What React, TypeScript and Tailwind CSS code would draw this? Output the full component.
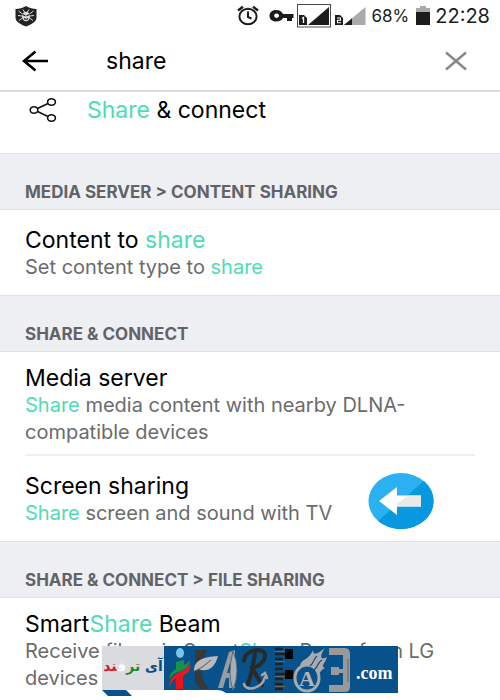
import type { ReactNode } from 'react';

function Hit({ children }: { children: ReactNode }) {
  return <span className="text-[#4fdcb4]">{children}</span>;
}

function SectionHeader({ children }: { children: ReactNode }) {
  return (
    <h2 className="border-y border-[#dfe1e4] bg-[#edeff3] pt-[26px] pb-[5px] pl-[25px] text-[17px] leading-6 font-bold text-[#626366]">
      {children}
    </h2>
  );
}

function Title({ children }: { children: ReactNode }) {
  return <span className="block text-[23px] leading-[27px] text-black">{children}</span>;
}

function Summary({ children }: { children: ReactNode }) {
  return <span className="block text-[20px] leading-[27px] text-[#6b6b6b]">{children}</span>;
}

function StatusBar() {
  return (
    <div className="flex h-8 items-center justify-between pr-[10px] pl-[14px] text-[#1c1c1c]">
      <svg className="h-[22px] w-6" viewBox="0 0 24 22" aria-hidden="true">
        <path d="M12 1 C15 3 19 4 22.500 4 L22.500 13 C22 17 17 19.500 12 21.500 C7 19.500 2 17 1.500 13 L1.500 4 C5 4 9 3 12 1Z" fill="#222" />
        <path d="M8.500 9 L4.500 6 M8 11 L4 10.500 M8.500 13 L5 15.500 M15.500 9 L19.500 6 M16 11 L20 10.500 M15.500 13 L19 15.500 M10.500 7 L9 4.500 M13.500 7 L15 4.500" stroke="#ddd" strokeWidth="1" />
        <ellipse cx="12" cy="11.500" rx="4" ry="4.800" fill="#ddd" />
        <path d="M8.500 9.500 L11.500 11 M15.500 9.500 L12.500 11 M10 13.500 Q12 15 14 13.500" stroke="#222" strokeWidth="1.200" fill="none" />
      </svg>
      <div className="flex items-center">
        <svg className="h-8 w-[130px]" viewBox="0 0 130 32" aria-hidden="true">
          <g fill="none" stroke="#1c1c1c" strokeWidth="2">
            <ellipse cx="12" cy="16.500" rx="8.600" ry="7.800" />
            <path d="M12 11.500 V17 L15.500 18.500" />
            <path d="M2 10.500 L7 6.800 M22 10.500 L17 6.800" strokeWidth="2.400" />
          </g>
          <path fillRule="evenodd" d="M40 10 C44 10 46 12 47 14 H57.500 V18 H56 V21 H51 V18 H47 C46 20 44 21.500 40 21.500 C36 21.500 33.500 19 33.500 15.700 C33.500 12.500 36 10 40 10Z M40.500 13.500 A2.500 2.200 0 1 0 40.600 13.500Z" fill="#1c1c1c" />
          <rect x="61.500" y="4.500" width="33" height="22.500" fill="none" stroke="#4a4a4a" />
          <path d="M72 25 L93 7 V25Z" fill="#1c1c1c" />
          <path d="M63 15 H68 L71 18 V25 H63Z" fill="#1c1c1c" />
          <path d="M66 18.500 L67.500 17.500 V23" stroke="#fff" strokeWidth="1.300" fill="none" />
          <path d="M108 25 L129.500 7 V25Z" fill="#aaa" />
          <path d="M108 25 L116 18.300 V25Z" fill="#1c1c1c" />
          <path d="M99 15 H104 L107 18 V25 H99Z" fill="#1c1c1c" />
          <path d="M101 18 H104.500 V20.300 H101.500 V22.800 H105" stroke="#fff" strokeWidth="1.100" fill="none" />
        </svg>
        <span className="ml-[6px] text-[17px] leading-8">68%</span>
        <svg className="ml-[6px] h-8 w-4" viewBox="0 0 16 32" aria-hidden="true">
          <path d="M5 6 H11 V8 H15 V12 H1 V8 H5Z" fill="#aaa" />
          <rect x="1" y="12" width="14" height="13" fill="#1c1c1c" />
        </svg>
        <span className="ml-1 text-[20px] leading-8">22:28</span>
      </div>
    </div>
  );
}

function Watermark() {
  return (
    <div className="absolute top-12 left-[102px]" aria-hidden="true">
      <div className="flex items-start">
        <div
          dir="rtl"
          className="h-11 w-[62px] bg-[#d9dbde] text-center font-['DejaVu_Sans',sans-serif] text-[14px] leading-10 font-bold whitespace-nowrap text-[#0b4f80]"
        >
          آی <span className="text-[#1e8a2b]">تر</span>
          <span className="text-white">ف</span>
          <span className="text-[#d8161f]">ند</span>
        </div>
        <svg className="h-[47px] w-[234px]" viewBox="0 0 234 47">
          <path d="M0 0 H234 V47 H62 Q58 44 54 44 H0Z" fill="#07528a" />
          <ellipse cx="16" cy="7" rx="4" ry="5" fill="#7cc4ea" />
          <path d="M12 27 H19 V43 H12Z" fill="#e8161c" />
          <path d="M5 42 C5 33 10 28 18 25 C23 23 25 20 26 16 C28 26 22 29 15 31 C9 33 7 37 5 42Z" fill="#e31c23" />
          <path d="M6 34 C5 27 8 26 12 23 V16 L20 14 V19 C23 18 24 16 26 14 C25 22 19 25 14 26 C9 27 7 30 6 34Z" fill="#159447" />
          <path d="M31 4 H43 L38 15 V29 Q39 37 46 43 H38 Q31 40 31 32Z" fill="#383838" />
          <path d="M30 25 C30 14 39 11 54 10 C51 22 43 27 34 23Z" fill="#b8babc" />
          <path d="M32 25 Q39 21 47 14" stroke="#555" strokeWidth="1" fill="none" />
          <path d="M54 42 L65 6 L71 4 V42 H65 V32 H62 L59 42Z M63 27 H66 V17Z" fill="#999b9e" fillRule="evenodd" />
          <path d="M69 5 Q77 24 69 44 Q63 28 69 5Z" fill="#aaaeb2" stroke="#526d80" />
          <g fill="none" strokeLinecap="round">
            <path d="M91 8 Q88 26 84 38 M80 15 C80 4 100 0 101 9 C101 17 93 21 88 22 L98 39" stroke="#292929" strokeWidth="4" />
            <path d="M80 38 C82 46 98 43 101 31 M98 29 L101 27 L103 32" stroke="#a4a5a7" strokeWidth="2.500" />
          </g>
          <path d="M111 3 H119 M111 8 H121 M111 13 H119 M111 18 H119 M111 23 H119 M111 28 H121 M111 33 H119 M111 38 H119 M111 43 H119" stroke="#222" strokeWidth="2.400" />
          <path d="M111 5.500 H121 M111 15.500 H121 M111 30.500 H121 M111 40.500 H121" stroke="#666" strokeWidth="1" />
          <rect x="121" y="3" width="8" height="10" fill="#060606" />
          <rect x="121" y="24" width="8" height="9" fill="#060606" />
          <path d="M136 19 C139 12 145 14 149 4 C149 10 154 8 161 2 C154 12 158 14 163 11 C161 18 156 20 161 22 C154 25 155 32 150 36 C151 27 147 19 136 19Z" fill="#aaa" />
          <ellipse cx="143" cy="32" rx="12" ry="13" fill="#07528a" stroke="#aaa" strokeWidth="3" />
          <path d="M146 20 C151 16 149 13 153 10 M150 24 C155 20 153 17 158 14" stroke="#07528a" strokeWidth="1.200" fill="none" />
          <text x="135" y="40" fontFamily="Liberation Serif, serif" fontSize="22" fontWeight="bold" fill="#b5b5b5">A</text>
          <path d="M165 2 H181 Q186 2 186 8 V41 Q186 46 181 46 H165 V39 H179 V9 H165Z M167 21 H175 V23 H180 V27 H175 V29 H167Z" fill="#999" />
          <path d="M184 13 V36" stroke="#656565" />
          <text x="192" y="33" fontFamily="Liberation Serif, serif" fontSize="18" fontWeight="bold" fill="#fff">.com</text>
        </svg>
      </div>
      <svg className="-mt-[3px] h-[11px] w-10" viewBox="0 0 40 11">
        <path d="M0 0 H24 L35 11 H11Z" fill="#07528a" />
      </svg>
    </div>
  );
}

export default function App() {
  return (
    <div className="overflow-x-hidden bg-white font-['Inter','Roboto',sans-serif]">
      <StatusBar />
      <header className="flex h-[58px] items-center pr-8 pl-[22px]">
        <button type="button" aria-label="Back" className="shrink-0">
          <svg className="h-6 w-[26px]" viewBox="0 0 26 24" fill="none" stroke="#000" strokeWidth="2.600">
            <path d="M1.500 12 H26 M13.500 2.500 L2 12 L13.500 21.500" />
          </svg>
        </button>
        <input
          type="text"
          aria-label="Search settings"
          defaultValue="share"
          className="ml-[58px] h-8 min-w-0 flex-1 bg-transparent text-[23px] leading-8 text-black outline-none"
        />
        <button type="button" aria-label="Clear" className="shrink-0">
          <svg className="h-6 w-6" viewBox="0 0 24 24" fill="none" stroke="#878787" strokeWidth="2.400">
            <path d="M2 3.500 L22 20.500 M22 3.500 L2 20.500" />
          </svg>
        </button>
      </header>
      <main>
        <a href="#share-connect" className="flex items-start border-t-2 border-[#dcdcdc] pt-[5px] pb-[29px] pl-[29px]">
          <svg className="h-[27px] w-7 shrink-0" viewBox="0 0 28 27" fill="none" stroke="#111" strokeWidth="1.600">
            <ellipse cx="5" cy="13" rx="3.800" ry="3.300" />
            <ellipse cx="22.500" cy="5" rx="3.900" ry="3.300" />
            <ellipse cx="22.500" cy="21" rx="3.900" ry="3.300" />
            <path d="M8.500 11.500 L19 6.500 M8.500 14.500 L19 19.500" />
          </svg>
          <span className="ml-[30px]">
            <Title><Hit>Share</Hit> &amp; connect</Title>
          </span>
        </a>

        <SectionHeader>MEDIA SERVER &gt; CONTENT SHARING</SectionHeader>
        <a href="#content" className="block px-[25px] pt-[17px] pb-[14px]">
          <Title>Content to <Hit>share</Hit></Title>
          <Summary>Set content type to <Hit>share</Hit></Summary>
        </a>

        <SectionHeader>SHARE &amp; CONNECT</SectionHeader>
        <a href="#media-server" className="block px-[25px] pt-[13px]">
          <Title>Media server</Title>
          <Summary><Hit>Share</Hit> media content with nearby DLNA-compatible devices</Summary>
          <span className="mt-2 block border-b-2 border-[#efefef]" />
        </a>
        <a href="#screen-sharing" className="flex items-start px-[25px] pt-[17px] pb-3">
          <span>
            <Title>Screen sharing</Title>
            <Summary><Hit>Share</Hit> screen and sound with TV</Summary>
          </span>
          <svg className="ml-9 h-14 w-[66px] shrink-0" viewBox="0 0 66 56" aria-hidden="true">
            <ellipse cx="33" cy="28" rx="32.500" ry="28" fill="#2bb0f2" />
            <path d="M56 8 A32.500 28 0 0 1 10 48Z" fill="#0699df" />
            <path d="M11 28 L29 14 V22.500 H53 V33.500 H29 V42 Z" fill="#fff" />
            <path d="M40 22.500 H53 V33.500 H29 V31Z" fill="#e9e9e9" />
          </svg>
        </a>

        <SectionHeader>SHARE &amp; CONNECT &gt; FILE SHARING</SectionHeader>
        <div className="relative">
          <a href="#beam" className="block px-[25px] pt-[13px] pb-1">
            <Title>Smart<Hit>Share</Hit> Beam</Title>
            <Summary>Receive files via Smart<Hit>Share</Hit> Beam from LG devices</Summary>
          </a>
          <Watermark />
        </div>
      </main>
    </div>
  );
}
